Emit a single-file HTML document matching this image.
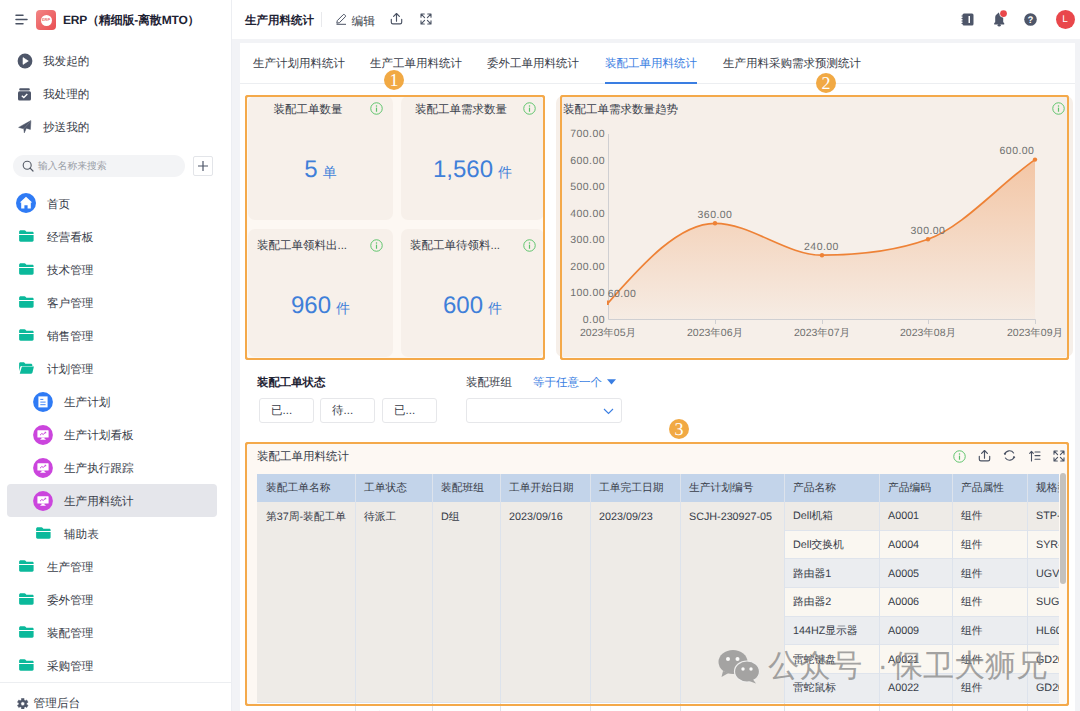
<!DOCTYPE html>
<html><head><meta charset="utf-8">
<style>
*{box-sizing:border-box;margin:0;padding:0}
html,body{width:1080px;height:711px;overflow:hidden;background:#fff;text-rendering:geometricPrecision;font-family:"Liberation Sans",sans-serif;color:#383d49}
.a{position:absolute;white-space:nowrap}
#side{position:absolute;left:0;top:0;width:232px;height:711px;background:#fff;border-right:1px solid #eceef2}
.si{position:absolute;left:0;height:33px;width:231px;font-size:11.6px;line-height:33px;color:#383d49}
.si .t{position:absolute;left:47px;top:-1.5px}
.si.sub .t{left:64px}
.si.sel::before{content:"";position:absolute;left:7px;top:-2px;width:210px;height:32.5px;border-radius:4px;background:#e5e6eb}
.si svg,.si .t{z-index:1}
.fold{position:absolute;left:18px;top:8px;width:17px;height:12px}
.sub .fold{left:35px}
#main{position:absolute;left:232px;top:0;width:848px;height:711px;background:#f2f3f6}
#top{position:absolute;left:232px;top:0;width:848px;height:39px;background:#fff}
#card{position:absolute;left:240px;top:43px;width:835px;height:668px;background:#fff}
.tab{position:absolute;top:54px;font-size:11.5px;line-height:20px;color:#383d49}
.badge{position:absolute;width:20px;height:20px;border-radius:50%;background:#f1a944;color:#fff;font-size:18px;line-height:21px;text-align:center;font-family:"Liberation Serif",serif;font-weight:normal}
.box{position:absolute;border:2px solid #f4a94a;border-radius:3px;background:#fdf8f3}
.th{font-size:10.75px;line-height:16px;color:#383d49}
.td{font-size:10.75px;line-height:16px;color:#383d49}
.bord{position:absolute;border:2px solid #f4a94a;border-radius:3px}
.kpi{position:absolute;background:#f7f0ea;border-radius:7px}
.kt{position:absolute;margin-top:1px;font-size:11.5px;line-height:14px;color:#383d49}
.info{position:absolute;width:13px;height:13px}
.kv{position:absolute;left:0;right:0;text-align:center;color:#3f7fd9}
.kv b{font-weight:normal;font-size:24px}
.kv i{font-style:normal;font-size:14px;margin-left:5px}
.yl{position:absolute;font-size:10.5px;letter-spacing:0.45px;color:#6f6f6f;text-align:right;width:50px;line-height:12px}
.xl{position:absolute;font-size:10.5px;color:#6f6f6f;line-height:12px;width:80px;text-align:center}
.dl{position:absolute;font-size:10.5px;letter-spacing:0.45px;color:#6f6f6f;line-height:12px;width:60px;text-align:center}
</style></head><body>
<!-- sidebar -->
<div id="side">
  <svg class="a" style="left:15px;top:14px" width="14" height="11" viewBox="0 0 14 11"><path d="M1 1.3H8M1 5.5H12M1 9.7H8" stroke="#4a5263" stroke-width="1.5" stroke-linecap="round"/></svg>
  <div class="a" style="left:36px;top:10px;width:20px;height:20px;border-radius:4px;background:linear-gradient(135deg,#f28585,#e94d51)"></div>
  <div class="a" style="left:40.5px;top:14.5px;width:11px;height:11px;border-radius:50%;background:#fff"></div><div class="a" style="left:40.5px;top:17px;width:11px;text-align:center;font-size:4px;line-height:6px;font-weight:bold;color:#ea6a6a">ERP</div>
  <div class="a" style="left:63px;top:11px;font-size:12px;letter-spacing:-0.2px;line-height:18px;font-weight:bold;color:#1d2233">ERP（精细版-离散MTO）</div>

  <div class="si" style="top:46px">
    <svg class="a" style="left:17px;top:7px" width="16" height="16" viewBox="0 0 16 16"><circle cx="8" cy="8" r="7.4" fill="#4e5669"/><path d="M6 4.6L11.3 8 6 11.4Z" fill="#fff" stroke="#fff" stroke-width="0.6" stroke-linejoin="round"/></svg>
    <span class="t" style="left:43px">我发起的</span></div>
  <div class="si" style="top:79px">
    <svg class="a" style="left:18px;top:8.5px" width="13" height="13" viewBox="0 0 13 13"><rect x="1.2" y="0.2" width="10.6" height="2.4" rx="1" fill="#4e5669"/><rect x="0" y="3.2" width="13" height="9.2" rx="1.5" fill="#4e5669"/><path d="M3.8 7.8L5.8 9.6 9.3 6" stroke="#fff" stroke-width="1.4" fill="none"/></svg>
    <span class="t" style="left:43px">我处理的</span></div>
  <div class="si" style="top:112px">
    <svg class="a" style="left:18px;top:8px" width="14" height="14" viewBox="0 0 14 14"><path d="M0.6 7.4L12.9 0.6 12.4 9.4 8.3 8.2 6.3 12.9 5.8 8.8Z" fill="#4e5669" stroke="#4e5669" stroke-width="0.5" stroke-linejoin="round"/><path d="M5.8 8.8L12.6 1.2" stroke="#fff" stroke-width="0.35" opacity="0.5"/></svg>
    <span class="t" style="left:43px">抄送我的</span></div>

  <div class="a" style="left:13px;top:155px;width:172px;height:22px;border-radius:11px;background:#f3f4f6"></div>
  <svg class="a" style="left:22px;top:160px" width="12" height="12" viewBox="0 0 12 12"><circle cx="5.2" cy="5.2" r="4" stroke="#555b66" stroke-width="1.1" fill="none"/><path d="M8.1 8.1L11 11" stroke="#555b66" stroke-width="1.2" stroke-linecap="round"/></svg>
  <div class="a" style="left:38px;top:160px;font-size:9.8px;line-height:14px;color:#9a9ea6">输入名称来搜索</div>
  <div class="a" style="left:193px;top:156px;width:20px;height:20px;border:1px solid #e3e5e9;border-radius:2px;background:#fff"></div>
  <svg class="a" style="left:197px;top:160px" width="12" height="12" viewBox="0 0 12 12"><path d="M6 1V11M1 6H11" stroke="#4e5669" stroke-width="1.2"/></svg>

  <div class="si" style="top:189px">
    <svg class="a" style="left:16px;top:4px" width="20" height="20" viewBox="0 0 20 20"><circle cx="10" cy="10" r="10" fill="#2f7bf5"/><path d="M10 3.8L16.2 9.6H14.8V15.6H11.6V12.3H8.4V15.6H5.2V9.6H3.8Z" fill="#fff"/></svg>
    <span class="t">首页</span></div>
  <div class="si" style="top:222px"><svg class="fold" width="16" height="13" viewBox="0 0 16 13"><path d="M0 2C0 0.9 0.9 0.3 1.8 0.3H5.8C6.4 0.3 6.8 0.6 7.2 1.1L7.9 2H14.2C15.1 2 15.7 2.6 15.7 3.4V4.3H0Z" fill="#0bb99b"/><path d="M0 5.3H15.7V11.2C15.7 12.1 15.1 12.7 14.2 12.7H1.5C0.6 12.7 0 12.1 0 11.2Z" fill="#0bb99b"/></svg><span class="t">经营看板</span></div>
  <div class="si" style="top:255px"><svg class="fold" width="16" height="13" viewBox="0 0 16 13"><path d="M0 2C0 0.9 0.9 0.3 1.8 0.3H5.8C6.4 0.3 6.8 0.6 7.2 1.1L7.9 2H14.2C15.1 2 15.7 2.6 15.7 3.4V4.3H0Z" fill="#0bb99b"/><path d="M0 5.3H15.7V11.2C15.7 12.1 15.1 12.7 14.2 12.7H1.5C0.6 12.7 0 12.1 0 11.2Z" fill="#0bb99b"/></svg><span class="t">技术管理</span></div>
  <div class="si" style="top:288px"><svg class="fold" width="16" height="13" viewBox="0 0 16 13"><path d="M0 2C0 0.9 0.9 0.3 1.8 0.3H5.8C6.4 0.3 6.8 0.6 7.2 1.1L7.9 2H14.2C15.1 2 15.7 2.6 15.7 3.4V4.3H0Z" fill="#0bb99b"/><path d="M0 5.3H15.7V11.2C15.7 12.1 15.1 12.7 14.2 12.7H1.5C0.6 12.7 0 12.1 0 11.2Z" fill="#0bb99b"/></svg><span class="t">客户管理</span></div>
  <div class="si" style="top:321px"><svg class="fold" width="16" height="13" viewBox="0 0 16 13"><path d="M0 2C0 0.9 0.9 0.3 1.8 0.3H5.8C6.4 0.3 6.8 0.6 7.2 1.1L7.9 2H14.2C15.1 2 15.7 2.6 15.7 3.4V4.3H0Z" fill="#0bb99b"/><path d="M0 5.3H15.7V11.2C15.7 12.1 15.1 12.7 14.2 12.7H1.5C0.6 12.7 0 12.1 0 11.2Z" fill="#0bb99b"/></svg><span class="t">销售管理</span></div>
  <div class="si" style="top:354px"><svg class="fold" width="17" height="13" viewBox="0 0 17 13"><path d="M0.5 1.8C0.5 0.9 1.1 0.3 2 0.3H5.8L7.3 1.8H13.3C14.2 1.8 14.8 2.4 14.8 3.3V4.2H3.2C2.4 4.2 1.9 4.7 1.7 5.4L0.5 10Z" fill="#0bb99b"/><path d="M3.5 4.9H16.5L15 11.5C14.8 12.2 14.3 12.6 13.6 12.6H1.2Z" fill="#0bb99b"/></svg><span class="t">计划管理</span></div>
  <div class="si sub" style="top:387px"><svg class="a" style="left:33px;top:4.5px" width="20" height="20" viewBox="0 0 20 20"><circle cx="10" cy="10" r="9.9" fill="#2f7bf5"/><path d="M5.4 4.4H14.6V15.4H5.4Z" fill="#fff"/><path d="M7.3 7.4H10.3M7.3 10.1H12.6M7.3 12.7H12.6" stroke="#2f7bf5" stroke-width="0.9"/></svg><span class="t">生产计划</span></div>
  <div class="si sub" style="top:420px"><svg class="a" style="left:33px;top:4.5px" width="20" height="20" viewBox="0 0 20 20"><circle cx="10" cy="10" r="9.9" fill="#cb45dd"/><rect x="4.4" y="5.2" width="11.2" height="7.4" rx="0.6" fill="#fff"/><path d="M7 10.2L8.8 8.5 10.2 9.4 12.8 7.2" stroke="#cb45dd" stroke-width="1" fill="none"/><path d="M12.8 7.2L11.6 7.3M12.8 7.2L12.7 8.4" stroke="#cb45dd" stroke-width="0.8"/><path d="M8.4 12.6H11.6V13.9H12.6V14.8H7.4V13.9H8.4Z" fill="#fff"/></svg><span class="t">生产计划看板</span></div>
  <div class="si sub" style="top:453px"><svg class="a" style="left:33px;top:4.5px" width="20" height="20" viewBox="0 0 20 20"><circle cx="10" cy="10" r="9.9" fill="#cb45dd"/><rect x="4.4" y="5.2" width="11.2" height="7.4" rx="0.6" fill="#fff"/><path d="M7 10.2L8.8 8.5 10.2 9.4 12.8 7.2" stroke="#cb45dd" stroke-width="1" fill="none"/><path d="M12.8 7.2L11.6 7.3M12.8 7.2L12.7 8.4" stroke="#cb45dd" stroke-width="0.8"/><path d="M8.4 12.6H11.6V13.9H12.6V14.8H7.4V13.9H8.4Z" fill="#fff"/></svg><span class="t">生产执行跟踪</span></div>
  <div class="si sub sel" style="top:486px"><svg class="a" style="left:33px;top:4.5px" width="20" height="20" viewBox="0 0 20 20"><circle cx="10" cy="10" r="9.9" fill="#cb45dd"/><rect x="4.4" y="5.2" width="11.2" height="7.4" rx="0.6" fill="#fff"/><path d="M7 10.2L8.8 8.5 10.2 9.4 12.8 7.2" stroke="#cb45dd" stroke-width="1" fill="none"/><path d="M12.8 7.2L11.6 7.3M12.8 7.2L12.7 8.4" stroke="#cb45dd" stroke-width="0.8"/><path d="M8.4 12.6H11.6V13.9H12.6V14.8H7.4V13.9H8.4Z" fill="#fff"/></svg><span class="t">生产用料统计</span></div>
  <div class="si sub" style="top:519px"><svg class="fold" width="16" height="13" viewBox="0 0 16 13"><path d="M0 2C0 0.9 0.9 0.3 1.8 0.3H5.8C6.4 0.3 6.8 0.6 7.2 1.1L7.9 2H14.2C15.1 2 15.7 2.6 15.7 3.4V4.3H0Z" fill="#0bb99b"/><path d="M0 5.3H15.7V11.2C15.7 12.1 15.1 12.7 14.2 12.7H1.5C0.6 12.7 0 12.1 0 11.2Z" fill="#0bb99b"/></svg><span class="t">辅助表</span></div>
  <div class="si" style="top:552px"><svg class="fold" width="16" height="13" viewBox="0 0 16 13"><path d="M0 2C0 0.9 0.9 0.3 1.8 0.3H5.8C6.4 0.3 6.8 0.6 7.2 1.1L7.9 2H14.2C15.1 2 15.7 2.6 15.7 3.4V4.3H0Z" fill="#0bb99b"/><path d="M0 5.3H15.7V11.2C15.7 12.1 15.1 12.7 14.2 12.7H1.5C0.6 12.7 0 12.1 0 11.2Z" fill="#0bb99b"/></svg><span class="t">生产管理</span></div>
  <div class="si" style="top:585px"><svg class="fold" width="16" height="13" viewBox="0 0 16 13"><path d="M0 2C0 0.9 0.9 0.3 1.8 0.3H5.8C6.4 0.3 6.8 0.6 7.2 1.1L7.9 2H14.2C15.1 2 15.7 2.6 15.7 3.4V4.3H0Z" fill="#0bb99b"/><path d="M0 5.3H15.7V11.2C15.7 12.1 15.1 12.7 14.2 12.7H1.5C0.6 12.7 0 12.1 0 11.2Z" fill="#0bb99b"/></svg><span class="t">委外管理</span></div>
  <div class="si" style="top:618px"><svg class="fold" width="16" height="13" viewBox="0 0 16 13"><path d="M0 2C0 0.9 0.9 0.3 1.8 0.3H5.8C6.4 0.3 6.8 0.6 7.2 1.1L7.9 2H14.2C15.1 2 15.7 2.6 15.7 3.4V4.3H0Z" fill="#0bb99b"/><path d="M0 5.3H15.7V11.2C15.7 12.1 15.1 12.7 14.2 12.7H1.5C0.6 12.7 0 12.1 0 11.2Z" fill="#0bb99b"/></svg><span class="t">装配管理</span></div>
  <div class="si" style="top:651px"><svg class="fold" width="16" height="13" viewBox="0 0 16 13"><path d="M0 2C0 0.9 0.9 0.3 1.8 0.3H5.8C6.4 0.3 6.8 0.6 7.2 1.1L7.9 2H14.2C15.1 2 15.7 2.6 15.7 3.4V4.3H0Z" fill="#0bb99b"/><path d="M0 5.3H15.7V11.2C15.7 12.1 15.1 12.7 14.2 12.7H1.5C0.6 12.7 0 12.1 0 11.2Z" fill="#0bb99b"/></svg><span class="t">采购管理</span></div>
  <div class="a" style="left:0;top:682px;width:231px;height:1px;background:#eceef1"></div>
  <svg class="a" style="left:17px;top:697.5px" width="11.5" height="11.5" viewBox="0 0 13 13"><path fill="#4e5669" fill-rule="evenodd" stroke="#4e5669" stroke-width="0.6" stroke-linejoin="round" d="M5.00 0.48 L8.00 0.48 L7.86 2.32 L9.44 3.23 L10.96 2.19 L12.46 4.79 L10.80 5.59 L10.80 7.41 L12.46 8.21 L10.96 10.81 L9.44 9.77 L7.86 10.68 L8.00 12.52 L5.00 12.52 L5.14 10.68 L3.56 9.77 L2.04 10.81 L0.54 8.21 L2.20 7.41 L2.20 5.59 L0.54 4.79 L2.04 2.19 L3.56 3.23 L5.14 2.32Z M6.5 4.3A2.2 2.2 0 1 0 6.5 8.7A2.2 2.2 0 1 0 6.5 4.3Z"/></svg>
  <div class="a" style="left:33.5px;top:696px;font-size:11.7px;line-height:16px;color:#383d49">管理后台</div>
</div>

<div id="main"></div>
<div id="top">
  <div class="a" style="left:13px;top:12px;font-size:11.5px;line-height:18px;font-weight:bold;color:#1d2233">生产用料统计</div>
  <div class="a" style="left:89px;top:12px;width:1px;height:15px;background:#e8e9ec"></div>
  <svg class="a" style="left:103px;top:13px" width="12" height="12" viewBox="0 0 12 12"><path d="M1.8 10.2L2.3 7.6 8.2 1.7A1 1 0 0 1 9.6 1.7L10.3 2.4A1 1 0 0 1 10.3 3.8L4.4 9.7Z M1.5 11.3H11" stroke="#4a5263" stroke-width="1" fill="none" stroke-linejoin="round"/></svg>
  <div class="a" style="left:119.5px;top:12px;font-size:11.8px;line-height:18px;color:#383d49">编辑</div>
  <svg class="a" style="left:158px;top:12px" width="13" height="13" viewBox="0 0 13 13"><path d="M1.3 7.3V10.2A1.6 1.6 0 0 0 2.9 11.8H10.1A1.6 1.6 0 0 0 11.7 10.2V7.3M6.5 9.2V1.6M3.6 4.4L6.5 1.5 9.4 4.4" stroke="#4a5263" stroke-width="1.15" fill="none" stroke-linecap="round" stroke-linejoin="round"/></svg>
  <svg class="a" style="left:188px;top:13px" width="12" height="12" viewBox="0 0 12 12"><path d="M1 4.3V1H4.3M1.2 1.2L4.6 4.6M7.7 1H11V4.3M10.8 1.2L7.4 4.6M11 7.7V11H7.7M10.8 10.8L7.4 7.4M4.3 11H1V7.7M1.2 10.8L4.6 7.4" stroke="#4a5263" stroke-width="1.1" fill="none" stroke-linecap="round" stroke-linejoin="round"/></svg>
  <svg class="a" style="left:729px;top:13px" width="13" height="13" viewBox="0 0 13 13"><rect x="1.5" y="0.5" width="11" height="12" rx="1.5" fill="#4e5669"/><rect x="7.5" y="3" width="1.5" height="7" fill="#fff"/><path d="M0.5 3H2.5M0.5 5.5H2.5M0.5 8H2.5M0.5 10.5H2.5" stroke="#4e5669" stroke-width="0.9"/></svg>
  <svg class="a" style="left:760px;top:10px" width="17" height="17" viewBox="0 0 17 17"><path d="M6.6 2.6C5.6 4 3.2 4.8 3.2 7V12.2L2.2 12.9V14.6H12.2V12.9L11.2 12.2V7C11.2 5 9.6 4.3 7.9 4C7.4 3.6 7 3 6.6 2.6Z" fill="#4e5669"/><ellipse cx="7.2" cy="15.2" rx="1.6" ry="1.2" fill="#4e5669"/><circle cx="11.5" cy="3.6" r="4.1" fill="#fff"/><circle cx="11.5" cy="3.6" r="3.4" fill="#e9474b"/></svg>
  <svg class="a" style="left:792px;top:13px" width="13" height="13" viewBox="0 0 13 13"><circle cx="6.5" cy="6.5" r="6.3" fill="#4e5669"/><text x="6.5" y="10" font-size="9.5" font-weight="bold" fill="#fff" text-anchor="middle" font-family="Liberation Sans">?</text></svg>
  <div class="a" style="left:823.5px;top:10px;width:19px;height:19px;border-radius:50%;background:#e9474b;color:#fff;font-size:10px;line-height:19px;text-align:center">L</div>
</div>

<div id="card">
  <div class="a" style="left:0;top:40px;width:835px;height:1px;background:#eceef1"></div>
</div>
<div class="tab" style="left:253px">生产计划用料统计</div>
<div class="tab" style="left:370px">生产工单用料统计</div>
<div class="tab" style="left:487px">委外工单用料统计</div>
<div class="tab" style="left:605px;color:#3a7ee2">装配工单用料统计</div>
<div class="a" style="left:605px;top:82px;width:92px;height:2px;background:#3a7ee2"></div>
<div class="tab" style="left:723px">生产用料采购需求预测统计</div>

<!-- box 1 KPIs -->
<div class="box" style="left:245px;top:95px;width:300px;height:265px"></div>
<div class="kpi" style="left:248px;top:96px;width:145px;height:124px"></div>
<div class="a kt" style="left:248px;width:120px;text-align:center;top:102px">装配工单数量</div>
<svg class="info" style="left:370px;top:102px" width="13" height="13" viewBox="0 0 12 12"><circle cx="6" cy="6" r="5.3" stroke="#5cc36a" stroke-width="0.9" fill="none"/><circle cx="6" cy="3.6" r="0.7" fill="#5cc36a"/><path d="M6 5.2V9" stroke="#5cc36a" stroke-width="1.1"/></svg>
<div class="a kv" style="left:248px;width:145px;top:156.3px;line-height:28px"><b>5</b><i>单</i></div>
<div class="kpi" style="left:401px;top:96px;width:143px;height:124px"></div>
<div class="a kt" style="left:401px;width:120px;text-align:center;top:102px">装配工单需求数量</div>
<svg class="info" style="left:523px;top:102px" width="13" height="13" viewBox="0 0 12 12"><circle cx="6" cy="6" r="5.3" stroke="#5cc36a" stroke-width="0.9" fill="none"/><circle cx="6" cy="3.6" r="0.7" fill="#5cc36a"/><path d="M6 5.2V9" stroke="#5cc36a" stroke-width="1.1"/></svg>
<div class="a kv" style="left:401px;width:143px;top:156.3px;line-height:28px"><b>1,560</b><i>件</i></div>
<div class="kpi" style="left:248px;top:229px;width:145px;height:128px"></div>
<div class="a kt" style="left:242px;width:120px;text-align:center;top:238px">装配工单领料出...</div>
<svg class="info" style="left:370px;top:239px" width="13" height="13" viewBox="0 0 12 12"><circle cx="6" cy="6" r="5.3" stroke="#5cc36a" stroke-width="0.9" fill="none"/><circle cx="6" cy="3.6" r="0.7" fill="#5cc36a"/><path d="M6 5.2V9" stroke="#5cc36a" stroke-width="1.1"/></svg>
<div class="a kv" style="left:248px;width:145px;top:292.3px;line-height:28px"><b>960</b><i>件</i></div>
<div class="kpi" style="left:401px;top:229px;width:143px;height:128px"></div>
<div class="a kt" style="left:395px;width:120px;text-align:center;top:238px">装配工单待领料...</div>
<svg class="info" style="left:523px;top:239px" width="13" height="13" viewBox="0 0 12 12"><circle cx="6" cy="6" r="5.3" stroke="#5cc36a" stroke-width="0.9" fill="none"/><circle cx="6" cy="3.6" r="0.7" fill="#5cc36a"/><path d="M6 5.2V9" stroke="#5cc36a" stroke-width="1.1"/></svg>
<div class="a kv" style="left:401px;width:143px;top:292.3px;line-height:28px"><b>600</b><i>件</i></div>
<!-- box 2 chart -->
<div class="box" style="left:560px;top:95px;width:509px;height:265px"></div>
<div class="a" style="left:556px;top:96px;width:517px;height:261px;border-radius:7px;background:#f6efe9"></div>
<div class="a" style="left:563px;top:102px;font-size:11.5px;line-height:16px;color:#383d49">装配工单需求数量趋势</div>
<svg class="info" style="left:1052px;top:102px" width="13" height="13" viewBox="0 0 12 12"><circle cx="6" cy="6" r="5.3" stroke="#5cc36a" stroke-width="0.9" fill="none"/><circle cx="6" cy="3.6" r="0.7" fill="#5cc36a"/><path d="M6 5.2V9" stroke="#5cc36a" stroke-width="1.1"/></svg>
<svg class="a" style="left:0;top:0" width="1080" height="711" viewBox="0 0 1080 711">
<defs><linearGradient id="g" x1="0" y1="159" x2="0" y2="319" gradientUnits="userSpaceOnUse"><stop offset="0" stop-color="#ee8236" stop-opacity="0.38"/><stop offset="1" stop-color="#ee8236" stop-opacity="0.03"/></linearGradient><clipPath id="cp"><rect x="608" y="100" width="430" height="220"/></clipPath></defs>
<path d="M608,303.1 C643.67,262.58 679.33,223.30 715,223.3 C750.67,223.30 786.33,255.20 822,255.2 C857.33,255.20 892.67,252.02 928,239.3 C963.67,226.46 999.33,184.57 1035,159.6 L1035,319 L608,319Z" fill="url(#g)" clip-path="url(#cp)"/>
<path d="M608.5,134V319.5H1035.5" stroke="#cfcfd2" stroke-width="1" fill="none"/>
<path d="M715.5,319.5V324" stroke="#cfcfd2" stroke-width="1"/>
<path d="M822.5,319.5V324" stroke="#cfcfd2" stroke-width="1"/>
<path d="M928.5,319.5V324" stroke="#cfcfd2" stroke-width="1"/>
<path d="M1035.5,319.5V324" stroke="#cfcfd2" stroke-width="1"/>
<path d="M608,303.1 C643.67,262.58 679.33,223.30 715,223.3 C750.67,223.30 786.33,255.20 822,255.2 C857.33,255.20 892.67,252.02 928,239.3 C963.67,226.46 999.33,184.57 1035,159.6" stroke="#ee8236" stroke-width="1.7" fill="none" clip-path="url(#cp)"/>
<circle cx="715" cy="223.3" r="2.2" fill="#ee8236"/>
<circle cx="822" cy="255.2" r="2.2" fill="#ee8236"/>
<circle cx="928" cy="239.3" r="2.2" fill="#ee8236"/>
<circle cx="1035" cy="159.6" r="2.2" fill="#ee8236"/>
<rect x="607" y="300.5" width="1.8" height="4.5" fill="#ee8236"/>
</svg>
<div class="yl" style="left:555px;top:128.2px">700.00</div>
<div class="yl" style="left:555px;top:154.7px">600.00</div>
<div class="yl" style="left:555px;top:181.2px">500.00</div>
<div class="yl" style="left:555px;top:207.7px">400.00</div>
<div class="yl" style="left:555px;top:234.2px">300.00</div>
<div class="yl" style="left:555px;top:260.7px">200.00</div>
<div class="yl" style="left:555px;top:287.2px">100.00</div>
<div class="yl" style="left:555px;top:313.7px">0.00</div>
<div class="xl" style="left:568px;top:326.5px">2023年05月</div>
<div class="xl" style="left:675px;top:326.5px">2023年06月</div>
<div class="xl" style="left:782px;top:326.5px">2023年07月</div>
<div class="xl" style="left:888px;top:326.5px">2023年08月</div>
<div class="xl" style="left:995px;top:326.5px">2023年09月</div>
<div class="dl" style="left:592px;top:288.0px">60.00</div>
<div class="dl" style="left:685px;top:209.0px">360.00</div>
<div class="dl" style="left:791.5px;top:240.7px">240.00</div>
<div class="dl" style="left:898px;top:224.5px">300.00</div>
<div class="dl" style="left:987px;top:145.0px">600.00</div>
<!-- filters -->
<div class="a" style="left:257px;top:375px;font-size:11.4px;line-height:17px;font-weight:bold;color:#1d2233">装配工单状态</div>
<div class="a" style="left:259px;top:398px;width:55px;height:25px;border:1px solid #e6e7ea;border-radius:3px;background:#fff"></div>
<div class="a" style="left:271px;top:403px;font-size:11.5px;line-height:17px;color:#383d49">已...</div>
<div class="a" style="left:320px;top:398px;width:55px;height:25px;border:1px solid #e6e7ea;border-radius:3px;background:#fff"></div>
<div class="a" style="left:332px;top:403px;font-size:11.5px;line-height:17px;color:#383d49">待...</div>
<div class="a" style="left:382px;top:398px;width:55px;height:25px;border:1px solid #e6e7ea;border-radius:3px;background:#fff"></div>
<div class="a" style="left:394px;top:403px;font-size:11.5px;line-height:17px;color:#383d49">已...</div>
<div class="a" style="left:466px;top:375px;font-size:11.5px;line-height:17px;color:#383d49">装配班组</div>
<div class="a" style="left:533px;top:375px;font-size:11.5px;line-height:17px;color:#3a7ee2">等于任意一个</div>
<svg class="a" style="left:607px;top:379px" width="9" height="6" viewBox="0 0 9 6"><path d="M0 0.3H9L4.5 5.5Z" fill="#3a7ee2"/></svg>
<div class="a" style="left:466px;top:398px;width:156px;height:25px;border:1px solid #e6e7ea;border-radius:3px;background:#fff"></div>
<svg class="a" style="left:603px;top:408px" width="11" height="7" viewBox="0 0 11 7"><path d="M1 1L5.5 5.5 10 1" stroke="#3a7ee2" stroke-width="1.1" fill="none"/></svg>
<!-- box 3 table -->
<div class="box" style="left:245px;top:442px;width:824px;height:264px"></div>
<div class="a" style="left:257px;top:449px;font-size:11.5px;line-height:16px;color:#383d49">装配工单用料统计</div>
<div class="a" style="left:257px;top:473.70px;width:802px;height:238px;overflow:hidden">
<div class="a" style="left:0;top:0;width:802px;height:28.5px;background:#c3d4ea"></div>
<div class="a" style="left:527px;top:28.50px;width:275px;height:28.63px;background:#eeebe7;border-bottom:1px solid #dfe4ec"></div>
<div class="a" style="left:527px;top:57.13px;width:275px;height:28.63px;background:#faf7f1;border-bottom:1px solid #dfe4ec"></div>
<div class="a" style="left:527px;top:85.76px;width:275px;height:28.63px;background:#ebedf0;border-bottom:1px solid #dfe4ec"></div>
<div class="a" style="left:527px;top:114.39px;width:275px;height:28.63px;background:#faf7f1;border-bottom:1px solid #dfe4ec"></div>
<div class="a" style="left:527px;top:143.02px;width:275px;height:28.63px;background:#ebedf0;border-bottom:1px solid #dfe4ec"></div>
<div class="a" style="left:527px;top:171.65px;width:275px;height:28.63px;background:#faf7f1;border-bottom:1px solid #dfe4ec"></div>
<div class="a" style="left:527px;top:200.28px;width:275px;height:28.63px;background:#ebedf0;border-bottom:1px solid #dfe4ec"></div>
<div class="a" style="left:0;top:28.50px;width:527px;height:200.41px;background:#eeebe7;border-bottom:1px solid #dfe4ec"></div>
<div class="a" style="left:0;top:228.91px;width:802px;height:30px;background:#fff"></div>
<div class="a" style="left:98px;top:0;width:1px;height:238px;background:#dde3ec"></div>
<div class="a" style="left:175px;top:0;width:1px;height:238px;background:#dde3ec"></div>
<div class="a" style="left:243px;top:0;width:1px;height:238px;background:#dde3ec"></div>
<div class="a" style="left:333px;top:0;width:1px;height:238px;background:#dde3ec"></div>
<div class="a" style="left:423px;top:0;width:1px;height:238px;background:#dde3ec"></div>
<div class="a" style="left:527px;top:0;width:1px;height:238px;background:#dde3ec"></div>
<div class="a" style="left:622px;top:0;width:1px;height:238px;background:#dde3ec"></div>
<div class="a" style="left:695px;top:0;width:1px;height:238px;background:#dde3ec"></div>
<div class="a" style="left:770px;top:0;width:1px;height:238px;background:#dde3ec"></div>
<div class="a th" style="left:9px;top:6px">装配工单名称</div>
<div class="a th" style="left:107px;top:6px">工单状态</div>
<div class="a th" style="left:184px;top:6px">装配班组</div>
<div class="a th" style="left:252px;top:6px">工单开始日期</div>
<div class="a th" style="left:342px;top:6px">工单完工日期</div>
<div class="a th" style="left:432px;top:6px">生产计划编号</div>
<div class="a th" style="left:536px;top:6px">产品名称</div>
<div class="a th" style="left:631px;top:6px">产品编码</div>
<div class="a th" style="left:704px;top:6px">产品属性</div>
<div class="a th" style="left:779px;top:6px">规格型号</div>
<div class="a td" style="left:9px;top:34.90px">第37周-装配工单</div>
<div class="a td" style="left:107px;top:34.90px">待派工</div>
<div class="a td" style="left:184px;top:34.90px">D组</div>
<div class="a td" style="left:252px;top:34.90px">2023/09/16</div>
<div class="a td" style="left:342px;top:34.90px">2023/09/23</div>
<div class="a td" style="left:432px;top:34.90px">SCJH-230927-05</div>
<div class="a td" style="left:536px;top:34.70px">Dell机箱</div>
<div class="a td" style="left:631px;top:34.70px">A0001</div>
<div class="a td" style="left:704px;top:34.70px">组件</div>
<div class="a td" style="left:779px;top:34.70px">STP-001</div>
<div class="a td" style="left:536px;top:63.30px">Dell交换机</div>
<div class="a td" style="left:631px;top:63.30px">A0004</div>
<div class="a td" style="left:704px;top:63.30px">组件</div>
<div class="a td" style="left:779px;top:63.30px">SYR-002</div>
<div class="a td" style="left:536px;top:92.00px">路由器1</div>
<div class="a td" style="left:631px;top:92.00px">A0005</div>
<div class="a td" style="left:704px;top:92.00px">组件</div>
<div class="a td" style="left:779px;top:92.00px">UGV-003</div>
<div class="a td" style="left:536px;top:120.60px">路由器2</div>
<div class="a td" style="left:631px;top:120.60px">A0006</div>
<div class="a td" style="left:704px;top:120.60px">组件</div>
<div class="a td" style="left:779px;top:120.60px">SUG 004</div>
<div class="a td" style="left:536px;top:149.20px">144HZ显示器</div>
<div class="a td" style="left:631px;top:149.20px">A0009</div>
<div class="a td" style="left:704px;top:149.20px">组件</div>
<div class="a td" style="left:779px;top:149.20px">HL600</div>
<div class="a td" style="left:536px;top:177.90px">雷蛇键盘</div>
<div class="a td" style="left:631px;top:177.90px">A0021</div>
<div class="a td" style="left:704px;top:177.90px">组件</div>
<div class="a td" style="left:779px;top:177.90px">GD2001</div>
<div class="a td" style="left:536px;top:206.50px">雷蛇鼠标</div>
<div class="a td" style="left:631px;top:206.50px">A0022</div>
<div class="a td" style="left:704px;top:206.50px">组件</div>
<div class="a td" style="left:779px;top:206.50px">GD2002</div>
<div class="a td" style="left:9px;top:235.10px">第38周-装配工单</div>
<div class="a td" style="left:107px;top:235.10px">已完工</div>
<div class="a td" style="left:184px;top:235.10px">A组</div>
<div class="a td" style="left:252px;top:235.10px">2023/09/18</div>
<div class="a td" style="left:342px;top:235.10px">2023/09/25</div>
<div class="a td" style="left:432px;top:235.10px">SCJH-230927-06</div>
<div class="a td" style="left:536px;top:235.10px">Dell机箱</div>
<div class="a td" style="left:631px;top:235.10px">A0001</div>
<div class="a td" style="left:704px;top:235.10px">组件</div>
<div class="a td" style="left:779px;top:235.10px">STP-001</div>
</div>
<div class="a" style="left:1060px;top:473px;width:6px;height:111px;border-radius:3px;background:#c4c1bd"></div>
<div class="bord" style="left:245px;top:442px;width:824px;height:264px"></div>
<svg class="info" style="left:953px;top:450px" width="13" height="13" viewBox="0 0 12 12"><circle cx="6" cy="6" r="5.3" stroke="#5cc36a" stroke-width="0.9" fill="none"/><circle cx="6" cy="3.6" r="0.7" fill="#5cc36a"/><path d="M6 5.2V9" stroke="#5cc36a" stroke-width="1.1"/></svg>
<svg class="a" style="left:978px;top:449px" width="13" height="13" viewBox="0 0 13 13"><path d="M1.3 7.3V10.2A1.6 1.6 0 0 0 2.9 11.8H10.1A1.6 1.6 0 0 0 11.7 10.2V7.3M6.5 9.2V1.6M3.6 4.4L6.5 1.5 9.4 4.4" stroke="#4a5263" stroke-width="1.15" fill="none" stroke-linecap="round" stroke-linejoin="round"/></svg>
<svg class="a" style="left:1003px;top:449px" width="13" height="13" viewBox="0 0 13 13"><path d="M1.8 5.3A4.9 4.9 0 0 1 10.6 4M11.2 7.7A4.9 4.9 0 0 1 2.4 9" stroke="#4a5263" stroke-width="1.15" fill="none" stroke-linecap="round"/><path d="M0.6 4.3L2.9 3.3 2.6 6Z M12.4 8.7L10.1 9.7 10.4 7Z" fill="#4a5263"/></svg>
<svg class="a" style="left:1029px;top:450px" width="12" height="12" viewBox="0 0 12 12"><path d="M2.5 11V1.5M0.7 3.3L2.5 1.3 4.3 3.3M6 2H11M6 5.6H11M6 9.2H11" stroke="#4a5263" stroke-width="1.1" fill="none" stroke-linecap="round" stroke-linejoin="round"/></svg>
<svg class="a" style="left:1053px;top:450px" width="12" height="12" viewBox="0 0 12 12"><path d="M1 4.3V1H4.3M1.2 1.2L4.6 4.6M7.7 1H11V4.3M10.8 1.2L7.4 4.6M11 7.7V11H7.7M10.8 10.8L7.4 7.4M4.3 11H1V7.7M1.2 10.8L4.6 7.4" stroke="#4a5263" stroke-width="1.1" fill="none" stroke-linecap="round" stroke-linejoin="round"/></svg>
<div class="bord" style="left:245px;top:95px;width:300px;height:265px"></div>
<div class="bord" style="left:560px;top:95px;width:509px;height:265px"></div>
<div class="badge" style="left:384px;top:70px">1</div>
<div class="badge" style="left:816px;top:73px">2</div>
<div class="badge" style="left:669px;top:419px">3</div>
<svg class="a" style="left:718px;top:649px;opacity:0.75" width="42" height="35" viewBox="0 0 42 35"><ellipse cx="15" cy="13" rx="14.5" ry="12" fill="#8c8c8c"/><path d="M5 22L3.5 28 10.5 24Z" fill="#8c8c8c"/><circle cx="10" cy="10" r="2" fill="#fff"/><circle cx="19.5" cy="10" r="2" fill="#fff"/><ellipse cx="29" cy="22.5" rx="12.5" ry="10.5" stroke="#f0f0f0" stroke-width="1.2" fill="#8c8c8c"/><path d="M35 30.5L38 34.5 31 32Z" fill="#8c8c8c"/><circle cx="25" cy="20" r="1.7" fill="#fff"/><circle cx="33" cy="20" r="1.7" fill="#fff"/></svg>
<div class="a" style="left:768px;top:646px;font-size:31.4px;line-height:40px;color:rgba(130,130,130,0.72)">公众号</div><div class="a" style="left:877.5px;top:646px;font-size:31.4px;line-height:40px;color:rgba(130,130,130,0.72)">·</div><div class="a" style="left:892px;top:646px;font-size:31px;line-height:40px;color:rgba(130,130,130,0.72)">保卫大狮兄</div>
</body></html>
